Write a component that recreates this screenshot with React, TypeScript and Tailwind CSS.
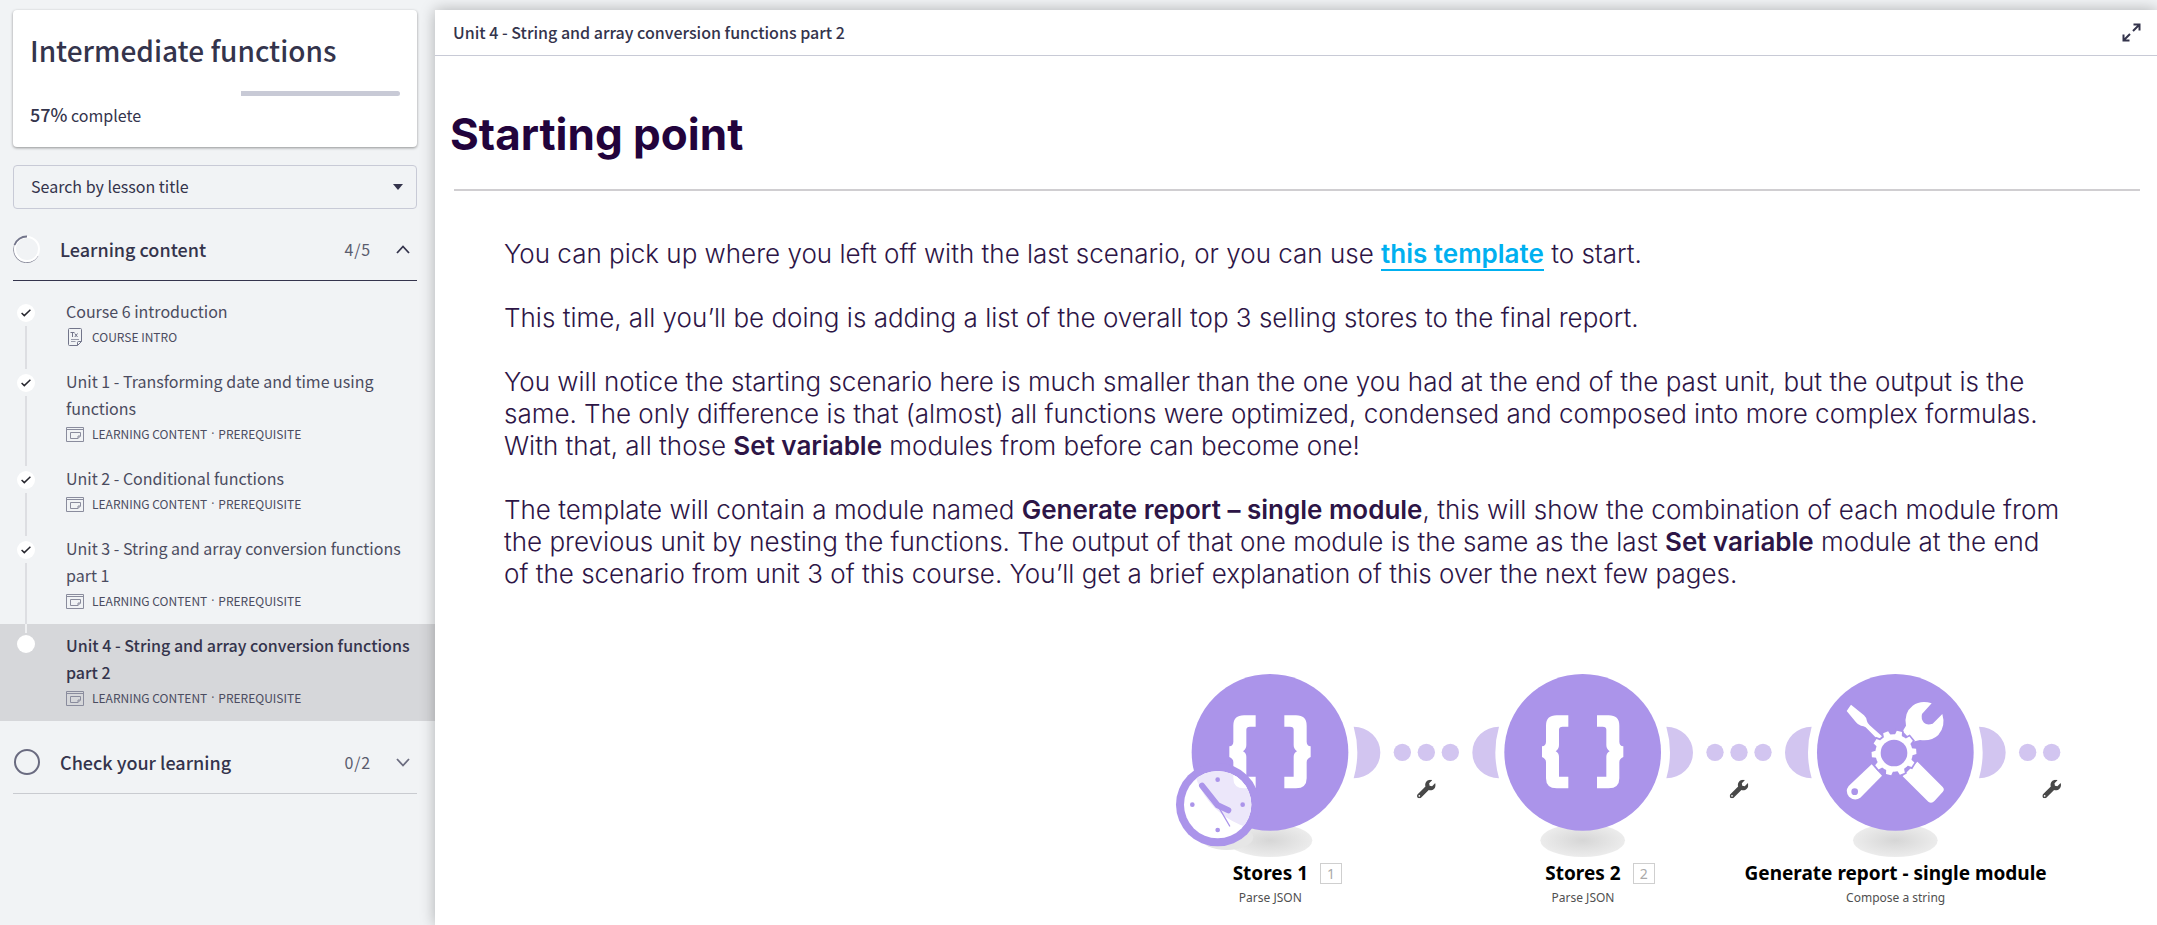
import React from "react";
import { FaWrench } from "react-icons/fa";

type Lesson = {
  title: string;
  tags: string[];
  kind: "text" | "page";
  done?: boolean;
  active?: boolean;
};

const unitTags = ["LEARNING CONTENT", "PREREQUISITE"];

const lessons: Lesson[] = [
  { title: "Course 6 introduction", tags: ["COURSE INTRO"], kind: "text", done: true },
  { title: "Unit 1 - Transforming date and time using functions", tags: unitTags, kind: "page", done: true },
  { title: "Unit 2 - Conditional functions", tags: unitTags, kind: "page", done: true },
  { title: "Unit 3 - String and array conversion functions part 1", tags: unitTags, kind: "page", done: true },
  { title: "Unit 4 - String and array conversion functions part 2", tags: unitTags, kind: "page", active: true },
];

function TextIcon() {
  return (
    <svg width="18" height="18" viewBox="0 0 18 18" fill="none" stroke="#72758a" strokeWidth="1">
      <path d="M3.5 .5h11a1 1 0 0 1 1 1v12l-4 4h-8a1 1 0 0 1-1-1v-15a1 1 0 0 1 1-1zM15.500 13.500h-3a1 1 0 0 0-1 1v3" />
      <path d="M4.500 4.500h4M6.500 4.500v4.500M8.800 5.500l2.700 3.500M11.500 5.500l-2.700 3.500" />
      <path d="M5 11.500h8M5 13.500h4.500" strokeOpacity=".7" />
    </svg>
  );
}

function PageIcon() {
  return (
    <svg width="18" height="15" viewBox="0 0 18 15" fill="none" stroke="#8a8c9d">
      <path d="M.5.5h17v14H.5zM.5 2.500h17" />
      <path d="M4.500 5.500h10v3.500l-2.500 2.500H4.500zM14.500 9h-2.500v2.500" />
    </svg>
  );
}

function Status({ done }: { done?: boolean }) {
  return (
    <span className="flex size-[18px] shrink-0 items-center justify-center rounded-full bg-white">
      {done && (
        <svg width="10" height="8" viewBox="0 0 10 8" fill="none" stroke="#26262e" strokeWidth="1.500">
          <path d="M.6 4l2.700 2.600L9.400.7" />
        </svg>
      )}
    </span>
  );
}

function LessonRow({ lesson, first, last }: { lesson: Lesson; first: boolean; last: boolean }) {
  return (
    <li className={lesson.active ? "bg-[#d6d7da]" : ""}>
      <a href="#lesson" className="flex pr-4 pl-[17px]">
        <span className="flex w-[18px] shrink-0 flex-col items-center">
          <span
            className={`h-[9px] w-0.5 shrink-0 ${lesson.active ? "mb-0.5" : "mb-[5px]"} ${
              first ? "" : lesson.active ? "bg-[#eff0f2]" : "bg-[#dddee2]"
            }`}
          />
          <Status done={lesson.done} />
          {!last && <span className="mt-1 w-0.5 grow bg-[#dddee2]" />}
        </span>
        <span className="ml-[31px] block pt-2 pb-[11px]">
          <span className={`block text-base leading-[27px] ${lesson.active ? "font-medium text-[#34344c]" : "text-[#4b4c60]"}`}>{lesson.title}</span>
          <span className="flex h-6 items-center text-xs text-[#4b4c60]">
            <span className="flex w-[26px]">{lesson.kind === "text" ? <TextIcon /> : <PageIcon />}</span>
            {lesson.tags.map((tag, i) => (
              <React.Fragment key={tag}>
                {i > 0 && <span className="w-[11px] text-center font-['Open_Sans',sans-serif]">·</span>}
                <span>{tag}</span>
              </React.Fragment>
            ))}
          </span>
        </span>
      </a>
    </li>
  );
}

const LEFT_BRACE =
  "M-43-111V-77H-60Q-71-77-71-68V-22Q-71-10-81-3Q-71 3-71 13V73H-43V108H-78Q-110 108-110 78V30Q-110 19-122 14V-18Q-110-20-110-32V-80Q-110-111-78-111Z";

function Braces() {
  return (
    <g fill="#fff">
      <path d={LEFT_BRACE} />
      <path d={LEFT_BRACE} transform="scale(-1 1)" />
    </g>
  );
}

function Tools() {
  const teeth = [0, 36, 72, 108, 144, 180, 216, 252, 288, 324];
  return (
    <g transform="translate(-526 -308)">
      <g fill="#fff">
        <path d="M393 165L432 197Q440 204 441 215Q443 222 449 227L486 260L474 270L437 233Q431 229 423 228Q414 226 408 218L380 184Z" />
        <path d="M635 161L606 193Q602 208 612 219Q621 228 638 222L667 193Q678 230 655 256Q634 276 600 271L578 276L548 245L558 228Q551 189 578 168Q602 151 635 161Z" />
        <path d="M455 344L386 409Q374 425 387 441Q404 456 421 444L486 378Z" />
        <path d="M592 336L668 412Q675 419 668 427L644 453Q635 463 625 456L548 380Z" />
      </g>
      <circle cx="404" cy="426" r="10" fill="#ab94ea" />
      <g transform="translate(522 310)">
        <g stroke="#ab94ea" strokeWidth="10" fill="#ab94ea">
          <circle r="54" />
          {teeth.map((a) => (
            <path key={a} d="M-11-52L-8-67H8L11-52Z" transform={`rotate(${a + 14})`} />
          ))}
        </g>
        <g fill="#fff">
          <circle r="56" />
          {teeth.map((a) => (
            <path key={a} d="M-11-52L-8-67H8L11-52Z" transform={`rotate(${a + 14})`} />
          ))}
        </g>
        <circle r="40" fill="#ab94ea" />
      </g>
    </g>
  );
}

function Clock() {
  return (
    <g transform="translate(-360 -308)">
      <clipPath id="clock-face">
        <circle cx="203" cy="465" r="101" />
      </clipPath>
      <circle cx="203" cy="465" r="125" fill="#ab94ea" />
      <circle cx="203" cy="465" r="101" fill="#fff" />
      <g clipPath="url(#clock-face)">
        <circle cx="360" cy="308" r="235" fill="#ece7fa" />
        <path d={LEFT_BRACE} transform="translate(360 308)" fill="#fff" />
      </g>
      <g fill="#ab94ea">
        <circle cx="203" cy="390" r="7" />
        <circle cx="278" cy="465" r="7" />
        <circle cx="203" cy="541" r="7" />
        <circle cx="127" cy="465" r="7" />
      </g>
      <g fill="none" stroke="#ab94ea" strokeLinecap="round" strokeLinejoin="round">
        <path d="M156 408L203 467L235 482" strokeWidth="18" />
        <path d="M203 467L239 529" strokeWidth="4" />
      </g>
    </g>
  );
}

function Moon({ flip }: { flip?: boolean }) {
  return <path d="M251-77A80 77.500 0 0 1 251 78Q273 0 251-77Z" fill="#d2c5f0" transform={flip ? "scale(-1 1)" : undefined} />;
}

function Module({ index, children }: { index: number; children: React.ReactNode }) {
  const dots = index === 2 ? [397, 469] : [397, 469, 541];
  return (
    <g transform={`translate(${468 + index * 938} 265)`}>
      <ellipse cy="264" rx="127" ry="50" fill="url(#ground)" />
      {index === 0 && <ellipse cx="-130" cy="255" rx="80" ry="38" fill="#e6e6e6" />}
      <circle r="235" fill="#ab94ea" />
      {children}
      <Moon />
      {index > 0 && <Moon flip />}
      {dots.map((x) => (
        <circle key={x} cx={x} r="26" fill="#d2c5f0" />
      ))}
      <FaWrench x={441} y={82} size={56} color="#484848" />
    </g>
  );
}

function ModuleLabel({ name, app, id }: { name: string; app: string; id?: number }) {
  return (
    <div className="flex flex-col items-center">
      <div className="relative text-[19px] leading-[26px] font-bold whitespace-nowrap text-black">
        {name}
        {id && (
          <span className="absolute top-[3px] left-full ml-3 flex h-[21px] w-[22px] items-center justify-center border border-[#cfcfcf] text-sm font-normal text-[#aaaaaa]">
            {id}
          </span>
        )}
      </div>
      <div className="text-xs leading-6 text-[#505050]">{app}</div>
    </div>
  );
}

function Diagram() {
  return (
    <figure className="mt-[74px] mr-[87px] ml-auto w-[956px] font-['Noto_Sans',sans-serif]">
      <svg viewBox="0 0 2868 588" className="block w-full" role="img" aria-label="Scenario modules">
        <defs>
          <radialGradient id="ground">
            <stop offset="0" stopColor="#d6d6d6" />
            <stop offset="1" stopColor="#ececec" />
          </radialGradient>
        </defs>
        <Module index={0}>
          <Braces />
          <Clock />
        </Module>
        <Module index={1}>
          <Braces />
        </Module>
        <Module index={2}>
          <Tools />
        </Module>
      </svg>
      <figcaption className="grid w-[938px] grid-cols-3">
        <ModuleLabel name="Stores 1" app="Parse JSON" id={1} />
        <ModuleLabel name="Stores 2" app="Parse JSON" id={2} />
        <ModuleLabel name="Generate report - single module" app="Compose a string" />
      </figcaption>
    </figure>
  );
}

function SectionHeader({ icon, title, count, open }: { icon: React.ReactNode; title: string; count: string; open?: boolean }) {
  return (
    <button
      type="button"
      aria-expanded={!!open}
      className={`mr-[18px] ml-[13px] flex h-[63px] items-center border-b text-left ${open ? "border-[#34344c]" : "border-[#c9cbd0]"}`}
    >
      {icon}
      <span className="ml-[19px] grow text-lg font-medium text-[#34344c]">{title}</span>
      <span className="text-base tracking-wider text-[#5b5c6e]">{count}</span>
      <svg className="mr-[7px] ml-[25px]" width="14" height="9" viewBox="0 0 14 9" fill="none" stroke={open ? "#34344c" : "#6c6d80"} strokeWidth="1.800">
        <path d={open ? "M1 8l6-6.500L13 8" : "M1 1l6 6.500L13 1"} />
      </svg>
    </button>
  );
}

export default function App() {
  return (
    <div className="flex min-h-screen overflow-hidden bg-[#f1f3f5] font-['Noto_Sans_CJK_SC',sans-serif] text-[#34344c]">
      <aside className="flex w-[435px] shrink-0 flex-col pt-2.5">
        <div className="mr-[18px] ml-[13px] rounded bg-white px-[17px] pt-5 pb-[19px] shadow-[0_1px_3px_rgba(0,0,0,0.4)]">
          <h1 className="text-[28px] leading-10 font-medium">Intermediate functions</h1>
          <div className="mt-[21px] flex justify-end" role="progressbar" aria-valuenow={57} aria-label="Course progress">
            <div className="h-[5px] w-[43%] rounded-r bg-[#c8cad6]" />
          </div>
          <p className="mt-[5px] text-base leading-[26px]">
            <span className="text-lg leading-[26px] font-medium">57%</span> complete
          </p>
        </div>

        <div className="mt-[18px] mr-[18px] ml-[13px] grid items-center">
          <select
            aria-label="Search by lesson title"
            className="col-start-1 row-start-1 h-11 w-full appearance-none rounded border border-[#c8cad6] bg-transparent px-[17px] pb-0.5 text-base"
          >
            <option>Search by lesson title</option>
          </select>
          <svg className="pointer-events-none col-start-1 row-start-1 mr-3.5 justify-self-end" width="10" height="6" viewBox="0 0 10 6" fill="#34344c">
            <path d="M0 0h10L5 6z" />
          </svg>
        </div>

        <div className="mt-[9px] flex flex-col">
          <SectionHeader
            open
            title="Learning content"
            count="4/5"
            icon={
              <svg width="28" height="28" viewBox="0 0 28 28" fill="none">
                <path d="M1.500 10A13 13 0 0 0 25 21" stroke="#8d8e9d" strokeWidth="1" />
                <circle cx="14" cy="14" r="12" stroke="#fff" strokeWidth="2" />
                <path d="M1.500 10A13 13 0 0 1 14 1.500" stroke="#72748a" strokeWidth="1.800" />
              </svg>
            }
          />
          <ul className="mt-[9px]">
            {lessons.map((l, i) => (
              <LessonRow key={l.title} lesson={l} first={i === 0} last={i === lessons.length - 1} />
            ))}
          </ul>
          <div className="mt-2.5 flex flex-col">
            <SectionHeader
              title="Check your learning"
              count="0/2"
              icon={
                <svg width="28" height="28" viewBox="0 0 28 28" fill="none">
                  <circle cx="14" cy="14" r="12" stroke="#6a6b80" strokeWidth="2" />
                </svg>
              }
            />
          </div>
        </div>
      </aside>

      <main className="relative mt-2.5 min-w-0 grow bg-white shadow-[0_0_14px_rgba(0,0,0,0.28)]">
        <header className="flex h-[46px] items-center justify-between border-b border-[#c8cad6] pr-4 pl-[18px]">
          <h2 className="pb-0.5 text-base font-medium">Unit 4 - String and array conversion functions part 2</h2>
          <button type="button" aria-label="Full screen">
            <svg width="19" height="19" viewBox="0 0 19 19" fill="none" stroke="#34344c" strokeWidth="2">
              <path d="M11 8l6.500-6.500M11.500 1.500h6v6M8 11l-6.500 6.500M1.500 11.500v6h6" />
            </svg>
          </button>
        </header>

        <article className="font-['Inter',sans-serif]">
          <h1 className="mt-[53px] ml-[15px] text-[44px] leading-[50px] font-bold text-[#22033c]">Starting point</h1>
          <hr className="mt-[30px] mr-[17px] ml-[19px] border-t-2 border-[#d0ced1]" />
          <div className="mt-[47px] mr-[92px] ml-[69px] flex flex-col gap-8 text-[26px] leading-8 font-light text-[#2d1546]">
            <p>
              You can pick up where you left off with the last scenario, or you can use{" "}
              <a href="#template" className="border-b-2 border-[#00b0f0] font-semibold text-[#00b0f0]">this template</a> to start.
            </p>
            <p>This time, all you’ll be doing is adding a list of the overall top 3 selling stores to the final report.</p>
            <p>
              You will notice the starting scenario here is much smaller than the one you had at the end of the past unit, but the output is the
              same. The only difference is that (almost) all functions were optimized, condensed and composed into more complex formulas.
              With that, all those <b className="font-semibold">Set variable</b> modules from before can become one!
            </p>
            <p>
              The template will contain a module named <b className="font-semibold">Generate report – single module</b>, this will show the
              combination of each module from the previous unit by nesting the functions. The output of that one module is the same as the
              last <b className="font-semibold">Set variable</b> module at the end of the scenario from unit 3 of this course. You’ll get a
              brief explanation of this over the next few pages.
            </p>
          </div>
          <Diagram />
        </article>
      </main>
    </div>
  );
}
